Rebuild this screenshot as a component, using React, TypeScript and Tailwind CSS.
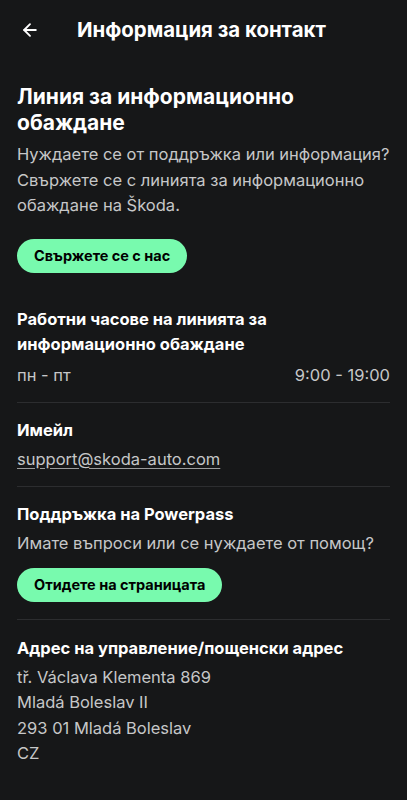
import { ArrowLeft } from "lucide-react"

const font = { fontFamily: "Inter, 'Noto Sans', sans-serif" }

function Divider() {
  return <div className="h-px bg-[#2c2d2f]" />
}

function GreenButton({ label }: { label: string }) {
  return (
    <button className="h-[34px] px-[17px] rounded-full bg-[#78faae] text-[14.5px] font-bold text-black">
      {label}
    </button>
  )
}

export default function App() {
  return (
    <div className="min-h-[800px] w-full bg-[#161718] text-white" style={font}>
      {/* Header */}
      <div className="flex items-center h-[60px] px-[20px]">
        <ArrowLeft className="w-[20px] h-[20px] text-white" strokeWidth={2.2} />
        <h1 className="ml-[37px] text-[20.4px] font-bold">Информация за контакт</h1>
      </div>

      <div className="px-[17px]">
        {/* Линия */}
        <div className="pt-[24px] pb-[24px]">
          <h2 className="text-[21px] leading-[26px] font-bold">Линия за информационно обаждане</h2>
          <p className="mt-[6px] text-[16.5px] leading-[25.5px] text-[#c6c7c8]">
            Нуждаете се от поддръжка или информация? Свържете се с линията за информационно обаждане на Škoda.
          </p>
          <div className="mt-[20px]">
            <GreenButton label="Свържете се с нас" />
          </div>
        </div>

        {/* Работни часове */}
        <div className="pt-[10px] pb-[14px]">
          <h3 className="text-[16.5px] leading-[25px] font-bold">Работни часове на линията за информационно обаждане</h3>
          <div className="mt-[6px] flex justify-between text-[16.5px] leading-[25px] text-[#c6c7c8]">
            <span>пн - пт</span>
            <span>9:00 - 19:00</span>
          </div>
        </div>
        <Divider />

        {/* Имейл */}
        <div className="pt-[15px] pb-[14px]">
          <h3 className="text-[16.5px] leading-[25px] font-bold">Имейл</h3>
          <a className="mt-[4px] block text-[16.5px] leading-[25px] text-[#c6c7c8] underline decoration-[#9a9b9c] underline-offset-[3px]">
            support@skoda-auto.com
          </a>
        </div>
        <Divider />

        {/* Powerpass */}
        <div className="pt-[15px] pb-[17px]">
          <h3 className="text-[16.5px] leading-[25px] font-bold">Поддръжка на Powerpass</h3>
          <p className="mt-[4px] text-[16.5px] leading-[25px] text-[#c6c7c8]">
            Имате въпроси или се нуждаете от помощ?
          </p>
          <div className="mt-[12px]">
            <GreenButton label="Отидете на страницата" />
          </div>
        </div>
        <Divider />

        {/* Адрес */}
        <div className="pt-[16px] pb-[20px]">
          <h3 className="text-[16.5px] leading-[25px] font-bold">Адрес на управление/пощенски адрес</h3>
          <div className="mt-[4px] text-[16.5px] leading-[25.5px] text-[#c6c7c8]">
            <p>tř. Václava Klementa 869</p>
            <p>Mladá Boleslav II</p>
            <p>293 01 Mladá Boleslav</p>
            <p>CZ</p>
          </div>
        </div>
      </div>
    </div>
  )
}
